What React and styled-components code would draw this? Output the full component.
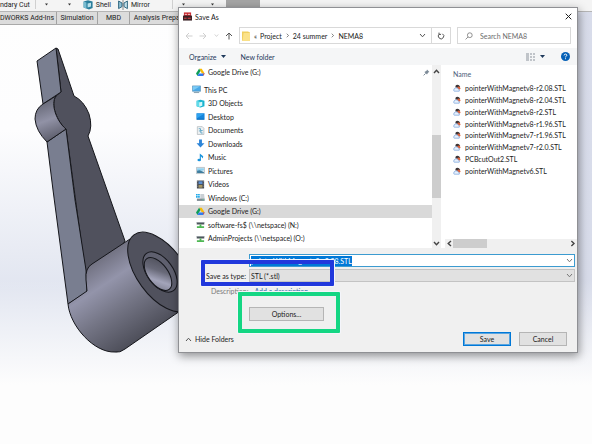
import React, { useEffect, useRef, useState } from "react";
import styled, { createGlobalStyle } from "styled-components";

const GlobalStyle = createGlobalStyle`
  * {
    box-sizing: border-box;
  }

  body {
    margin: 0;
    overflow: hidden;
    color: #1b1b1b;
    font-family: Lato, "Open Sans", sans-serif;
    font-size: 7px;
    line-height: 10px;
  }

  button, input, select {
    margin: 0;
    padding: 0;
    border: 0;
    border-radius: 0;
    background: none;
    color: inherit;
    font: inherit;
    outline: none;
  }

  svg {
    display: block;
    flex: none;
  }
`;

const Desktop = styled.div`
  position: relative;
  min-height: 100vh;
  background:
    linear-gradient(180deg, transparent 280px, #fdfdfd 385px),
    linear-gradient(90deg, transparent 40%, #d8dcea 100%),
    linear-gradient(180deg, #fefefe 0, #fdfdfe 130px, #e1e5f0 290px);
`;

const Ribbon = styled.header`
  display: flex;
  align-items: flex-start;
  height: 12px;
  background: #f4f4f4;
  border-bottom: 1px solid #b5b5b5;
  font-family: Roboto, "Open Sans", sans-serif;
  line-height: 8px;
`;

const RibbonButton = styled.button`
  display: flex;
  align-items: center;
  gap: 3px;
  height: 9px;
  margin-right: ${(props) => props.$after || 0}px;
`;

const RibbonLine = styled.span`
  width: 1px;
  height: 9px;
  margin-right: 9px;
  background: #d0d0d0;
`;

const RibbonBlock = styled.span`
  width: 34px;
  height: 8px;
  background: #a5a5a5;
`;

const Tabs = styled.div`
  display: flex;
  width: 178px;
  height: 13px;
  background: #d9d9d9;
  border-bottom: 1px solid #a9a9a9;
  font-family: Roboto, "Open Sans", sans-serif;
`;

const Tab = styled.button`
  flex: none;
  width: ${(props) => props.$width}px;
  height: 12px;
  border-right: 1px solid #a2a2a2;
  background: #dcdcdc;
  line-height: 12px;
  text-align: ${(props) => props.$align || "center"};
  white-space: nowrap;
`;

const Model = styled.svg`
  position: absolute;
  top: 0;
  left: 0;
`;

const Dialog = styled.section`
  position: absolute;
  top: 7px;
  left: 178px;
  right: 14px;
  background: #fff;
  border: 1px solid #8f9094;
  box-shadow: 1px 3px 9px rgba(0, 0, 0, 0.42);
`;

const TitleBar = styled.div`
  display: flex;
  align-items: center;
  gap: 3px;
  height: 19px;
  padding: 0 5px 2px 4px;
`;

const Title = styled.h1`
  flex: 1;
  margin: 0;
  font-size: 7px;
  font-weight: 400;
`;

const NavRow = styled.div`
  display: flex;
  gap: 6px;
  padding: 0 6px 4px 6px;
`;

const NavButtons = styled.div`
  display: flex;
  align-items: center;
  justify-content: space-between;
  width: 48px;
`;

const AddressBar = styled.div`
  display: flex;
  flex: 1;
  align-items: center;
  gap: 3px;
  height: 17px;
  padding-left: 1px;
  border: 1px solid #d9d9d9;
`;

const Crumb = styled.button`
  white-space: nowrap;
`;

const BarButton = styled.button`
  display: flex;
  align-items: center;
  justify-content: center;
  width: ${(props) => props.$width}px;
  height: 15px;
  margin-left: ${(props) => (props.$push ? "auto" : "-3px")};
  border-left: ${(props) => (props.$push ? "0" : "1px solid #d9d9d9")};
`;

const SearchBox = styled.label`
  display: flex;
  align-items: center;
  gap: 7px;
  width: 114px;
  height: 17px;
  padding-left: 7px;
  border: 1px solid #d9d9d9;

  input {
    flex: 1;
    min-width: 0;
  }

  input::placeholder {
    color: #6d6d6d;
    opacity: 1;
  }
`;

const Toolbar = styled.div`
  display: flex;
  align-items: center;
  height: 17px;
  padding: 0 7px 0 10px;
  background: #f5f6f7;
  color: #1e395b;
`;

const ToolButton = styled.button`
  display: flex;
  align-items: center;
  gap: 4px;
  margin-right: ${(props) => props.$after || 0}px;
`;

const Spacer = styled.span`
  flex: 1;
`;

const Body = styled.div`
  display: grid;
  grid-template-columns: 253px 9px 1fr;
  height: 183px;
`;

const Places = styled.ul`
  display: grid;
  grid-template-rows: 14px;
  align-content: start;
  margin: 0;
  padding: 0;
  list-style: none;
`;

const PlaceTree = styled.ul`
  display: grid;
  grid-auto-rows: 1fr;
  height: 162px;
  margin: 4px 0 0;
  padding: 0;
  list-style: none;
`;

const Place = styled.button`
  display: flex;
  align-items: center;
  gap: 3px;
  width: 100%;
  height: 100%;
  padding: 0 2px 0 ${(props) => (props.$root ? 13 : 17)}px;
  background: ${(props) => (props.$selected ? "#d9d9d9" : "transparent")};
`;

const ScrollTrack = styled.div`
  display: flex;
  flex-direction: ${(props) => (props.$horizontal ? "row" : "column")};
  align-items: center;
  justify-content: space-between;
  padding: ${(props) => (props.$horizontal ? "0 1px" : "3px 0 1px")};
  background: #f0f0f0;
`;

const ThumbV = styled.span`
  width: 9px;
  height: 63px;
  margin-top: 60px;
  margin-bottom: 42px;
  background: #cdcdcd;
`;

const ThumbH = styled.span`
  width: 34px;
  height: 9px;
  margin-right: auto;
  background: #cdcdcd;
`;

const FilePane = styled.div`
  display: grid;
  grid-template-rows: 1fr 9px;
  padding-left: 4px;
`;

const FileTable = styled.table`
  width: 100%;
  height: 112px;
  border-collapse: collapse;

  th {
    height: 17px;
    padding: 0 0 0 8px;
    color: #4c607a;
    font-weight: 400;
    text-align: left;
  }

  td {
    padding: 0 0 0 8px;
  }
`;

const FileCell = styled.span`
  display: flex;
  align-items: center;
  gap: 4px;
  white-space: nowrap;
`;

const Footer = styled.form`
  position: relative;
  padding: 6px 2px 6px 6px;
  background: #f0f0f0;
`;

const Fields = styled.div`
  display: grid;
  grid-template-columns: 61px 1fr;
  column-gap: 3px;
  row-gap: 2px;
  align-items: center;
`;

const Label = styled.label`
  text-align: right;
`;

const Field = styled.div`
  display: flex;
  align-items: center;
  height: 13px;
  padding: 0 1px;
  border: 1px solid ${(props) => (props.$active ? "#3c9bd0" : "#c3c3c3")};
  background: ${(props) => (props.$active ? "#fff" : "#e1e1e1")};

  input, select {
    flex: 1;
    min-width: 0;
    appearance: none;
  }

  input::selection {
    background: #0078d7;
    color: #fff;
  }
`;

const Description = styled.div`
  display: flex;
  gap: 6px;
  padding: 4px 0 0 26px;
  color: #7a7a7a;
  white-space: nowrap;

  a {
    color: #3568a8;
    text-decoration: none;
  }
`;

const PushButton = styled.button`
  width: ${(props) => props.$width}px;
  height: 14px;
  border: 1px solid ${(props) => (props.$primary ? "#0078d7" : "#b5b5b5")};
  background: #e1e1e1;
  line-height: 12px;
  box-shadow: ${(props) => (props.$primary ? "inset 0 0 0 1px #5aa5e0" : "none")};
`;

const OptionsRow = styled.div`
  padding: 11px 0 11px 64px;
`;

const Actions = styled.div`
  display: flex;
  align-items: center;
  gap: 8px;
  padding-right: 8px;
`;

const HideFolders = styled.button`
  display: flex;
  align-items: center;
  gap: 3px;
  margin-right: auto;
`;

// highlight frame drawn over the form
const Mark = styled.span`
  position: absolute;
  top: ${(props) => props.$top}px;
  left: ${(props) => props.$left}px;
  width: ${(props) => props.$width}px;
  height: ${(props) => props.$height}px;
  border: 4px solid ${(props) => props.$color};
  border-radius: 1px;
  box-shadow: 0 0 0 1px #f4f5fb;
  pointer-events: none;
`;

const chevrons = {
  down: "M1 2 L3.5 4.8 L6 2",
  up: "M1 5 L3.5 2.2 L6 5",
  left: "M5 1 L2.2 3.5 L5 6",
  right: "M2.4 1 L5 3.5 L2.4 6",
};

const Chevron = ({ to, color = "#555", size = 7, weight = 1 }) => (
  <svg width={size} height={size} viewBox="0 0 7 7">
    <path d={chevrons[to]} fill="none" stroke={color} strokeWidth={weight} />
  </svg>
);

const Caret = ({ color = "#1e395b", size = 5 }) => (
  <svg width={size} height={size} viewBox="0 0 5 5">
    <path d="M0 1H5L2.5 4Z" fill={color} />
  </svg>
);

const Arrow = ({ to, color }) => (
  <svg width="8" height="8" viewBox="0 0 8 8">
    <path
      d="M7.5 4H1M4 1L1 4L4 7"
      fill="none"
      stroke={color}
      transform={`rotate(${{ left: 0, up: 90, right: 180 }[to]} 4 4)`}
    />
  </svg>
);

const icons = {
  drive: (
    <>
      <path d="M3.4 .8H6.4L9.6 6.2H6.6Z" fill="#fbbc04" />
      <path d="M3.4 .8L0 6.2L1.6 8.8L5 3.4Z" fill="#0f9d58" />
      <path d="M3.2 6.2H9.6L8 8.8H1.6Z" fill="#2f7df0" />
      <path d="M8 6.2H9.6L8 8.8Z" fill="#ea4335" />
    </>
  ),
  pc: (
    <>
      <path d="M.5 1H9.5V7H.5Z" fill="#4aa9e8" stroke="#5588aa" strokeWidth=".6" />
      <path d="M1 1.4H9L1 6Z" fill="#7ccbf5" />
      <path d="M2 8.4H8" stroke="#7d97a8" />
    </>
  ),
  objects: (
    <>
      <path d="M.7 2L5 .7L9.4 2V8L5 9.4L.7 8Z" fill="#18b4cf" />
      <path d="M.7 2L5 3.2V9.4L.7 8Z" fill="#62dbe9" />
      <path d="M3.6 3.8L7 3V7.4L3.6 8.2Z" fill="#d5f7fa" />
    </>
  ),
  desktop: (
    <>
      <path d="M.5 1.4H9.5V8.6H.5Z" fill="#1585dc" />
      <path d="M1 2H9L1 7Z" fill="#2fa3f0" />
      <path d="M1 8H9" stroke="#0a5ca8" strokeWidth=".7" />
    </>
  ),
  documents: (
    <>
      <path d="M1.5 .7H7L8.8 2.5V9.4H1.5Z" fill="#eef1f3" stroke="#a6adb3" strokeWidth=".7" />
      <path d="M3 3H5V5H7.4M3.2 5.5H5.4V7.8H7.4" fill="none" stroke="#4a9cc0" strokeWidth=".9" />
    </>
  ),
  downloads: <path d="M3.4 .6H6.6V4.6H9.4L5 9.4L.6 4.6H3.4Z" fill="#2e85d8" />,
  music: (
    <>
      <path d="M4.2 .5L8 3.6L7.6 6.2L5.4 3.6V8H4.2Z" fill="#1a94dc" />
      <ellipse cx="3.6" cy="7.8" rx="2" ry="1.5" fill="#1a94dc" />
    </>
  ),
  pictures: (
    <>
      <path d="M.5 1.6H9.5V8.4H.5Z" fill="#f5fafc" stroke="#9aa7b0" strokeWidth=".7" />
      <path d="M1.2 2.4H8.8V5L1.2 6Z" fill="#8fd0ef" />
      <path d="M1.2 5.2L4 4.6L8.8 6.6V7.7H1.2Z" fill="#3f7d9e" />
    </>
  ),
  videos: (
    <>
      <path d="M1 .6H9V9.4H1Z" fill="#3b3f48" />
      <path d="M2.8 1.4H7.2V4.6H2.8Z" fill="#5c8fd0" />
      <path d="M2.8 5.4H7.2V8.6H2.8Z" fill="#a59765" />
      <path d="M1.9 1V9M8.1 1V9" stroke="#d5d8dd" strokeWidth=".6" strokeDasharray="1 1" />
    </>
  ),
  windows: (
    <>
      <path d="M0 1H1.9V2.9H0ZM2.3 1H4.2V2.9H2.3ZM0 3.3H1.9V5.2H0ZM2.3 3.3H4.2V5.2H2.3Z" fill="#22a9e8" />
      <path d="M4.8 1.2H9L9.6 6.4H4.8Z" fill="#c9d0d5" />
      <path d="M1 6.2H9.6V8.8H1Z" fill="#7f8b94" />
      <path d="M7.2 7.5H8.8" stroke="#64e0a0" strokeWidth=".8" />
    </>
  ),
  network: (
    <>
      <path d="M.8 2.4H9.2V5H.8Z" fill="#4e565c" />
      <path d="M.8 2.4H9.2V3.2H.8Z" fill="#a2abb0" />
      <path d="M4 5H6V7H9V8.8H1V7H4Z" fill="#4fb854" />
    </>
  ),
  file: (
    <>
      <path d="M3 2.6Q4.6 .2 7.6 1.6L9 3.8L6 4.8L3.4 4.6Z" fill="#3c3436" />
      <circle cx="7.2" cy="5.2" r="2" fill="#dc6038" />
      <path d="M1 8.6Q.4 5.6 3 5Q5.4 4 6.6 6.4Q8.8 7 7.8 9H1.6Z" fill="#e8f1fc" stroke="#7ba4de" strokeWidth=".9" />
    </>
  ),
  folder: (
    <>
      <path d="M1 .5H7L9 1.5V9.7H1Z" fill="#f0cf60" />
      <path d="M2.6 2H9V9.7H1.6Z" fill="#fbe28a" />
    </>
  ),
  app: (
    <>
      <path d="M1 .5H9V5H1Z" fill="#c9252c" />
      <path d="M0 4H10V9.5H0Z" fill="#3a2225" />
      <path d="M2 2.6H4.4M5.4 2.6H8" stroke="#fff" strokeWidth=".9" />
      <path d="M1.2 7H4M5.2 7H8.6" stroke="#e14348" strokeWidth="1.2" />
    </>
  ),
  shell: (
    <>
      <path d="M.6 1.4L5 .2L9.6 1.6V8L6 9.6L.6 7.6Z" fill="#2b7f9d" />
      <path d="M.6 1.4L3.4 2.6V8.6L.6 7.6Z" fill="#79bcd1" />
      <path d="M4.6 3.6L8 2.8V6.6L4.6 7.6Z" fill="#b9e0ea" />
    </>
  ),
  mirror: (
    <>
      <path d="M.6 1V8.6L4 6.6V3Z" fill="#8fc0d4" stroke="#225c78" strokeWidth=".9" />
      <path d="M9.4 1V8.6L6 6.6V3Z" fill="#c4dfe9" stroke="#225c78" strokeWidth=".9" />
      <path d="M5 0V10" stroke="#444" strokeWidth=".6" />
    </>
  ),
};

const Icon = ({ name, size = 9 }) => (
  <svg width={size} height={size} viewBox="0 0 10 10">
    {icons[name]}
  </svg>
);

const places = [
  { icon: "pc", name: "This PC", root: true },
  { icon: "objects", name: "3D Objects" },
  { icon: "desktop", name: "Desktop" },
  { icon: "documents", name: "Documents" },
  { icon: "downloads", name: "Downloads" },
  { icon: "music", name: "Music" },
  { icon: "pictures", name: "Pictures" },
  { icon: "videos", name: "Videos" },
  { icon: "windows", name: "Windows (C:)" },
  { icon: "drive", name: "Google Drive (G:)" },
  { icon: "network", name: "software-fs$ (\\\\netspace) (N:)" },
  { icon: "network", name: "AdminProjects (\\\\netspace) (O:)" },
];

const files = [
  "pointerWithMagnetv8-r2.08.STL",
  "pointerWithMagnetv8-r2.04.STL",
  "pointerWithMagnetv8-r2.STL",
  "pointerWithMagnetv8-r1.96.STL",
  "pointerWithMagnetv7-r1.96.STL",
  "pointerWithMagnetv7-r2.0.STL",
  "PCBcutOut2.STL",
  "pointerWithMagnetv6.STL",
];

const PointerModel = () => (
  <Model width="200" height="370" viewBox="0 0 200 370">
    <defs>
      <linearGradient id="barrel" gradientUnits="userSpaceOnUse" x1="98" y1="255" x2="150" y2="333">
        <stop offset="0" stopColor="#6c6c7b" />
        <stop offset="0.3" stopColor="#9394aa" />
        <stop offset="0.6" stopColor="#747585" />
        <stop offset="1" stopColor="#4d4e59" />
      </linearGradient>
      <linearGradient id="hub" gradientUnits="userSpaceOnUse" x1="44" y1="100" x2="58" y2="138">
        <stop offset="0" stopColor="#646674" />
        <stop offset="0.5" stopColor="#9192a6" />
        <stop offset="1" stopColor="#5c5d6b" />
      </linearGradient>
      <linearGradient id="bore" gradientUnits="userSpaceOnUse" x1="149" y1="262" x2="168" y2="289">
        <stop offset="0" stopColor="#50515d" />
        <stop offset="0.35" stopColor="#686978" />
        <stop offset="0.65" stopColor="#a3a4ba" />
        <stop offset="1" stopColor="#747586" />
      </linearGradient>
    </defs>
    <g stroke="#15161b" strokeWidth="1" strokeLinejoin="round">
      <path
        d="M56 48L58 49L74 96Q84 101 89 114Q93 127 88 136L125 241L100 280L87 285L66 129C57 122 50 104 56 96L61 92Z"
        fill="#50515d"
      />
      <path d="M37 61L56 48L61 92L43 104Z" fill="#797e90" />
      <path d="M47 142L66 129L75 200L86 270L87 292L68 304L53 190Z" fill="#797e90" />
      <path d="M43 104L56 96C50 104 57 122 66 129L47 142Q36 131 35 119Q35 109 43 104Z" fill="url(#hub)" />
      <path d="M130 239L92 264Q85 268 86 280L87 291L68 304C70 326 94 353 115 352Q120 353 125 349L180 311Z" fill="url(#barrel)" />
      <ellipse cx="161" cy="272" rx="46" ry="24" transform="rotate(54 161 272)" fill="#50515d" />
      <ellipse cx="160" cy="272" rx="23" ry="13" transform="rotate(54 160 272)" fill="#5f606f" />
      <ellipse cx="158" cy="274" rx="19" ry="10" transform="rotate(54 158 274)" fill="url(#bore)" />
    </g>
  </Model>
);

const SaveDialog = () => {
  const [fileName, setFileName] = useState("pointerWithMagnetv8-r2.08.STL");
  const [selected, setSelected] = useState("Google Drive (G:)");
  const nameRef = useRef(null);

  useEffect(() => {
    nameRef.current.focus();
    nameRef.current.select();
  }, []);

  return (
    <Dialog role="dialog" aria-labelledby="dialog-title">
      <TitleBar>
        <Icon name="app" size={9} />
        <Title id="dialog-title">Save As</Title>
        <button type="button" aria-label="Close">
          <svg width="7" height="7" viewBox="0 0 7 7">
            <path d="M.7 .7L6.3 6.3M6.3 .7L.7 6.3" stroke="#222" />
          </svg>
        </button>
      </TitleBar>

      <NavRow>
        <NavButtons>
          <button type="button" aria-label="Back"><Arrow to="left" color="#cfcfcf" /></button>
          <button type="button" aria-label="Forward"><Arrow to="right" color="#cfcfcf" /></button>
          <button type="button" aria-label="Recent"><Chevron to="down" color="#c4c4c4" size={5} /></button>
          <button type="button" aria-label="Up"><Arrow to="up" color="#555" /></button>
        </NavButtons>
        <AddressBar>
          <Icon name="folder" size={10} />
          <Crumb type="button">«</Crumb>
          <Crumb type="button">Project</Crumb>
          <Chevron to="right" size={5} />
          <Crumb type="button">24 summer</Crumb>
          <Chevron to="right" size={5} />
          <Crumb type="button">NEMA8</Crumb>
          <BarButton type="button" $width={18} $push aria-label="Previous locations">
            <Chevron to="down" />
          </BarButton>
          <BarButton type="button" $width={19} aria-label="Refresh">
            <svg width="8" height="8" viewBox="0 0 8 8">
              <path d="M2.4 2A2.7 2.7 0 1 0 5.4 1.8M2 .6V2.4H4" fill="none" stroke="#555" />
            </svg>
          </BarButton>
        </AddressBar>
        <SearchBox>
          <svg width="8" height="8" viewBox="0 0 8 8">
            <circle cx="4.8" cy="3.2" r="2.4" fill="none" stroke="#777" strokeWidth=".8" />
            <path d="M3 5L.6 7.4" stroke="#777" strokeWidth=".8" />
          </svg>
          <input type="text" placeholder="Search NEMA8" aria-label="Search NEMA8" />
        </SearchBox>
      </NavRow>

      <Toolbar>
        <ToolButton type="button" $after={15}>Organize <Caret /></ToolButton>
        <ToolButton type="button">New folder</ToolButton>
        <Spacer />
        <ToolButton type="button" $after={16} aria-label="Change view">
          <svg width="10" height="8" viewBox="0 0 10 8">
            <path d="M0 1H3M0 3H3M0 5H3M0 7H3M4 1H6M7 1H9M4 4H6M7 4H9M4 7H6M7 7H9" stroke="#8b929b" />
          </svg>
          <Caret />
        </ToolButton>
        <ToolButton type="button" aria-label="Help">
          <svg width="9" height="9" viewBox="0 0 9 9">
            <circle cx="4.5" cy="4.5" r="4.5" fill="#0560b6" />
            <path d="M3.1 3.4Q3.2 2.1 4.5 2.1Q5.9 2.2 5.8 3.4Q5.7 4 4.9 4.4Q4.5 4.7 4.5 5.4M4.5 6.3V7.2" fill="none" stroke="#fff" />
          </svg>
        </ToolButton>
      </Toolbar>

      <Body>
        <div>
          <Places>
            <li>
              <Place type="button">
                <Icon name="drive" />
                Google Drive (G:)
                <Spacer />
                <svg width="7" height="7" viewBox="0 0 7 7">
                  <path d="M4 .6L6.4 3L5.2 3.4L4 5.6L1.4 3L3.6 1.8Z" fill="#7d8b98" />
                  <path d="M2.6 4.4L.6 6.4" stroke="#7d8b98" />
                </svg>
              </Place>
            </li>
          </Places>
          <PlaceTree>
            {places.map((place) => (
              <li key={place.name}>
                <Place
                  type="button"
                  $root={place.root}
                  $selected={place.name === selected}
                  onClick={() => setSelected(place.name)}
                >
                  <Icon name={place.icon} />
                  {place.name}
                </Place>
              </li>
            ))}
          </PlaceTree>
        </div>
        <ScrollTrack>
          <Chevron to="up" color="#444" weight={1.4} />
          <ThumbV />
          <Chevron to="down" color="#444" weight={1.4} />
        </ScrollTrack>
        <FilePane>
          <div>
            <FileTable>
              <thead>
                <tr><th scope="col">Name</th></tr>
              </thead>
              <tbody>
                {files.map((file) => (
                  <tr key={file}>
                    <td>
                      <FileCell><Icon name="file" size={8} />{file}</FileCell>
                    </td>
                  </tr>
                ))}
              </tbody>
            </FileTable>
          </div>
          <ScrollTrack $horizontal>
            <Chevron to="left" color="#444" weight={1.4} />
            <ThumbH />
            <Chevron to="right" color="#444" weight={1.4} />
          </ScrollTrack>
        </FilePane>
      </Body>

      <Footer onSubmit={(e) => e.preventDefault()}>
        <Fields>
          <span />
          <Field $active>
            <input
              ref={nameRef}
              type="text"
              aria-label="File name"
              value={fileName}
              onChange={(e) => setFileName(e.target.value)}
            />
            <Chevron to="down" color="#777" />
          </Field>
          <Label htmlFor="save-type">Save as type:</Label>
          <Field>
            <select id="save-type">
              <option>STL (*.stl)</option>
            </select>
            <Chevron to="down" color="#777" />
          </Field>
        </Fields>
        <Description>
          <span>Description:</span>
          <a href="#description">Add a description</a>
        </Description>
        <OptionsRow>
          <PushButton type="button" $width={75}>Options...</PushButton>
        </OptionsRow>
        <Actions>
          <HideFolders type="button"><Chevron to="up" /> Hide Folders</HideFolders>
          <PushButton type="submit" $width={48} $primary>Save</PushButton>
          <PushButton type="button" $width={48}>Cancel</PushButton>
        </Actions>
        <Mark $color="#2138dc" $top={12} $left={22} $width={133} $height={26} />
        <Mark $color="#14d683" $top={44} $left={59} $width={102} $height={41} />
      </Footer>
    </Dialog>
  );
};

const App = () => (
  <>
    <GlobalStyle />
    <Desktop>
      <Ribbon>
        <RibbonButton type="button" $after={5}>ndary Cut</RibbonButton>
        <RibbonLine />
        <RibbonButton type="button" $after={20} aria-label="More cuts"><Caret color="#333" size={3} /></RibbonButton>
        <RibbonButton type="button" $after={12} aria-label="More patterns"><Caret color="#333" size={3} /></RibbonButton>
        <RibbonButton type="button" $after={7}><Icon name="shell" size={10} />Shell</RibbonButton>
        <RibbonButton type="button" $after={22}><Icon name="mirror" size={10} />Mirror</RibbonButton>
        <RibbonLine />
        <RibbonButton type="button" $after={26} aria-label="More references"><Caret color="#333" size={3} /></RibbonButton>
        <RibbonButton type="button" $after={12} aria-label="More curves"><Caret color="#333" size={3} /></RibbonButton>
        <RibbonBlock />
      </Ribbon>
      <Tabs>
        <Tab type="button" $width={57} $align="left">DWORKS Add-Ins</Tab>
        <Tab type="button" $width={41}>Simulation</Tab>
        <Tab type="button" $width={32}>MBD</Tab>
        <Tab type="button" $width={57}>Analysis Prepar</Tab>
      </Tabs>
      <PointerModel />
      <SaveDialog />
    </Desktop>
  </>
);

export default App;
